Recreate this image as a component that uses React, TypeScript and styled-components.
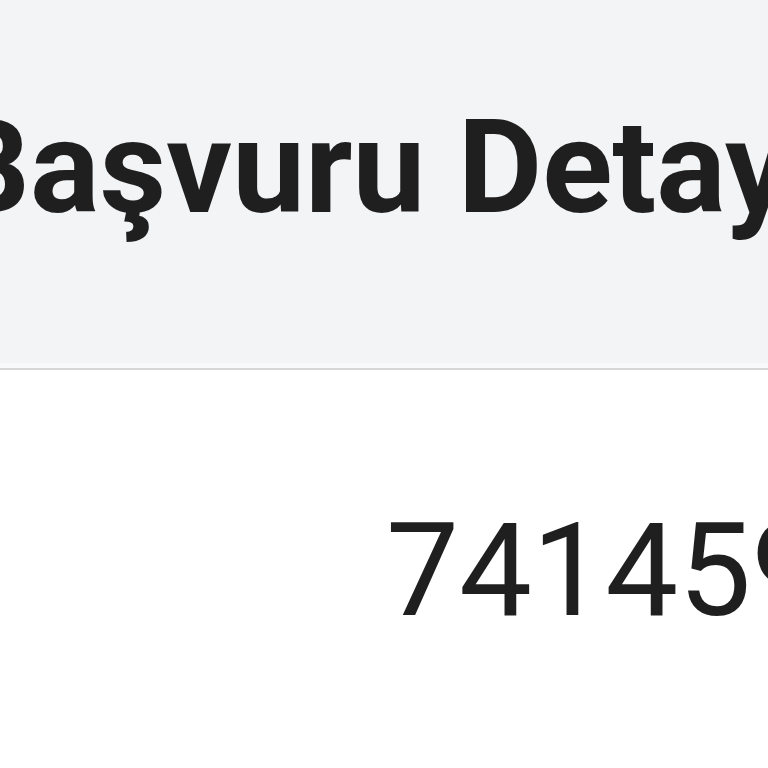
import React from "react";
import styled, { createGlobalStyle } from "styled-components";

const GlobalStyle = createGlobalStyle`
  html, body {
    margin: 0;
    padding: 0;
    background: #ffffff;
    overflow: hidden;
  }
  body {
    font-family: Roboto, "Liberation Sans", sans-serif;
    color: #202124;
  }
`;

const Page = styled.div`
  width: 768px;
  height: 768px;
  display: flex;
  flex-direction: column;
  overflow: hidden;
  background: #ffffff;
`;

const Header = styled.header`
  flex-shrink: 0;
  height: 265px;
  padding-top: 103px;
  background: #f3f4f6;
  border-bottom: 2px solid #d6d6d6;
  box-shadow: inset 0 -5px 0 #f8f9fa;
  overflow: hidden;
`;

const Title = styled.h1`
  margin: 0 0 0 -53px;
  font-size: 130px;
  line-height: 130px;
  font-weight: 700;
  white-space: nowrap;
  color: #1f1f1f;
`;

const Body = styled.section`
  padding: 136px 0 0 386px;
  overflow: hidden;
`;

const Value = styled.div`
  font-size: 130px;
  line-height: 130px;
  font-weight: 400;
  white-space: nowrap;
  color: #1f1f1f;
`;

export default function App() {
  return (
    <>
      <GlobalStyle />
      <Page>
        <Header>
          <Title>Başvuru Detayları</Title>
        </Header>
        <Body>
          <Value>741459</Value>
        </Body>
      </Page>
    </>
  );
}
